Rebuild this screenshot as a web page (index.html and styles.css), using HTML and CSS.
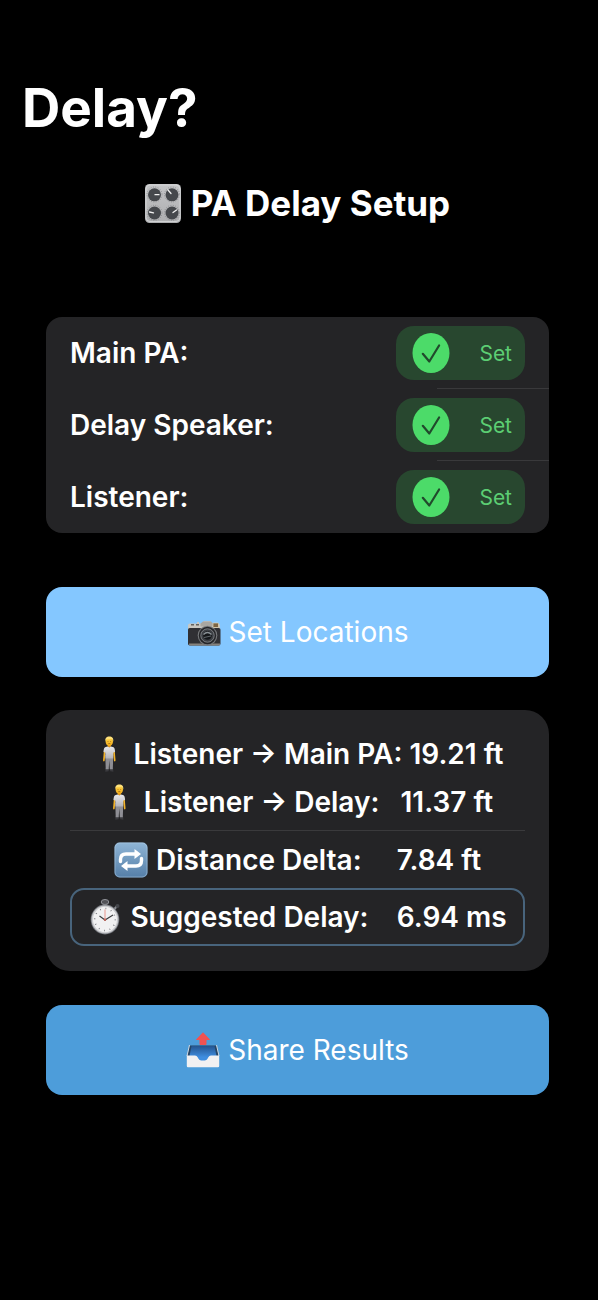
FILE: index.html
```html
<!DOCTYPE html>
<html lang="en">
<head>
<meta charset="utf-8">
<meta name="viewport" content="width=device-width, initial-scale=1">
<title>Delay?</title>
<link rel="stylesheet" href="styles.css">
</head>
<body>
<svg class="defs" aria-hidden="true">
  <defs>
    <linearGradient id="hair" x1="0" y1="0" x2="0" y2="1"><stop offset="0" stop-color="#ffd84a"/><stop offset="1" stop-color="#f0a818"/></linearGradient>
    <linearGradient id="shirt" x1="0" y1="0" x2="0" y2="1"><stop offset="0" stop-color="#e9e9ec"/><stop offset="1" stop-color="#b4b4ba"/></linearGradient>
    <linearGradient id="panel" x1="0" y1="0" x2="0" y2="1"><stop offset="0" stop-color="#c4c5c7"/><stop offset="1" stop-color="#adaeb0"/></linearGradient>
    <linearGradient id="tile" x1="0" y1="0" x2="0" y2="1"><stop offset="0" stop-color="#8fb5d6"/><stop offset="1" stop-color="#557fa8"/></linearGradient>
    <linearGradient id="tray" x1="0" y1="0" x2="0" y2="1"><stop offset="0" stop-color="#24548f"/><stop offset=".7" stop-color="#3f8ee0"/></linearGradient>
    <symbol id="person" viewBox="0 0 34 36">
      <path d="M13.500 32h3.200v3.200l-3.400.5zM17.800 32H21l.4 3.700-3.200-.5z" fill="#3b3b3f"/>
      <path d="M13.300 19h8l-.5 14.200h-3l-.5-9-.6 9h-3z" fill="#8f8f95"/>
      <path d="M11.900 14.500l1.700.3-.6 6.700-.4 3.600c-.9.8-1.700.1-1.500-1.400zM22.700 14.500l-1.700.3.6 6.700.4 3.600c.9.8 1.700.1 1.500-1.400z" fill="#f3b32a"/>
      <path d="M15.800 8.800h3v3h-3z" fill="#dc9218"/>
      <path d="M13.700 10.900l2-.5 1.600 1.200 1.600-1.200 2 .5c1.600.5 2 2 2.200 5l-1.800.5-.2 6h-7.600l-.2-6-1.800-.5c.2-3 .6-4.500 2.200-5z" fill="url(#shirt)"/>
      <ellipse cx="17.300" cy="5.500" rx="3.700" ry="4.600" fill="url(#hair)"/>
      <path d="M13.400 5.500C12.800 2.400 14.600.5 17.300.5s4.600 1.900 3.900 5c-.4-1.600-1.300-2.400-2.300-2.700-1.400.8-3.700.4-4.500.8-.6.4-.8 1-1 1.900z" fill="#ffe27b"/>
      <path d="M15.600 5.500h.8M18.300 5.500h.8M16.300 7.600h2" stroke="#8b5a17" stroke-width=".7"/>
    </symbol>
    <symbol id="set-check" viewBox="0 0 38 40">
      <ellipse cx="19" cy="20" rx="18.500" ry="20" fill="#4cdb69"/>
      <path d="M10.800 20.800l6.500 7.700 9.800-16" fill="none" stroke="#214a2c" stroke-width="2.200" stroke-linecap="round" stroke-linejoin="round"/>
    </symbol>
  </defs>
</svg>
<main class="page">
  <h1 class="title">Delay?</h1>
  <h2 class="subtitle">
    <svg class="knobs" viewBox="0 0 36 39" aria-hidden="true">
      <rect width="36" height="39" rx="4.500" fill="url(#panel)"/>
      <rect x="1" y="1" width="34" height="36.500" rx="4" fill="none" stroke="#d8d9da" stroke-width=".8"/>
      <g fill="none" stroke="#77797c" stroke-width=".8" stroke-dasharray=".8 1.600"><circle cx="9.500" cy="10.500" r="7.500"/><circle cx="27" cy="10.500" r="7.500"/><circle cx="9.500" cy="28.800" r="7.500"/><circle cx="27" cy="28.800" r="7.500"/></g>
      <g fill="#45484c"><circle cx="9.500" cy="10.800" r="6.500"/><circle cx="27" cy="10.800" r="6.500"/><circle cx="9.500" cy="29" r="6.500"/><circle cx="27" cy="29" r="6.500"/></g>
      <g stroke="#f2f2f2" stroke-width="1.300" stroke-linecap="round"><path d="M10 10.700h4M26 9.500l-3-3.500M8.500 28.800l-4-.8M28 28.500l3.500-2.500"/></g>
    </svg>
    <span>PA Delay Setup</span>
  </h2>

  <ul class="card status">
    <li class="status-row"><span class="status-name">Main PA:</span><span class="pill"><svg class="tick" aria-hidden="true"><use href="#set-check"/></svg><span>Set</span></span></li>
    <li class="status-row"><span class="status-name">Delay Speaker:</span><span class="pill"><svg class="tick" aria-hidden="true"><use href="#set-check"/></svg><span>Set</span></span></li>
    <li class="status-row"><span class="status-name">Listener:</span><span class="pill"><svg class="tick" aria-hidden="true"><use href="#set-check"/></svg><span>Set</span></span></li>
  </ul>

  <button class="action locations" type="button">
    <svg class="emoji" viewBox="0 0 34 36" aria-hidden="true">
      <path d="M3 9.500h7V8h2v1.500h2L17 7h6l2 2.500h6q2 0 2 2V15H1v-3.500q0-2 2-2z" fill="#c9c7c1"/>
      <path d="M13.500 9.500L16 7.500h8l2 2v3H13.500z" fill="#a9a7a2"/>
      <rect x="1" y="14" width="32.500" height="17.500" rx="1.800" fill="#303034"/>
      <path d="M2 29.500h31v1q0 1-1 1H3q-1 0-1-1z" fill="#85817b"/>
      <rect x="26" y="9" width="5.500" height="4.500" rx=".6" fill="#7c6544" stroke="#e3d8bd" stroke-width=".7"/>
      <path d="M4 10.800h3M9 10.800h3" stroke="#65635f" stroke-width="1.600"/>
      <circle cx="20.500" cy="21.500" r="9.800" fill="#77797c"/>
      <circle cx="20.500" cy="21.500" r="8.700" fill="#252629"/>
      <circle cx="20.500" cy="21.500" r="6.700" fill="#3c3f44" stroke="#8a8d91" stroke-width=".8"/>
      <circle cx="20.500" cy="21.500" r="4.300" fill="#15171a"/>
      <path d="M16.500 20.500q4-4 8 0" stroke="#8b9297" stroke-width="1.200" fill="none"/>
      <path d="M17 23.500l7-1.500" stroke="#686e73" stroke-width=".9"/>
    </svg>
    <span>Set Locations</span>
  </button>

  <section class="card results">
    <p class="result"><svg class="emoji" aria-hidden="true"><use href="#person"/></svg><span>Listener → Main PA: 19.21 ft</span></p>
    <p class="result"><svg class="emoji" aria-hidden="true"><use href="#person"/></svg><span>Listener → Delay:   11.37 ft</span></p>
    <hr class="rule">
    <p class="result">
      <svg class="emoji" viewBox="0 0 34 36" aria-hidden="true">
        <rect x=".5" y=".5" width="33" height="35" rx="5" fill="url(#tile)"/>
        <rect x="1" y="1" width="32" height="34" rx="5" fill="none" stroke="#b2cee5" stroke-opacity=".5"/>
        <path d="M6.500 19.500v-2q0-5.500 5.500-5.500h9M27.500 16.500v2q0 5.500-5.500 5.500h-9" fill="none" stroke="#fff" stroke-width="3.400" stroke-linecap="round"/>
        <path d="M20.500 7l6.500 5-6.500 5zM13.500 19L7 24l6.500 5z" fill="#fff"/>
      </svg>
      <span>Distance Delta:     7.84 ft</span>
    </p>
    <p class="result suggested">
      <svg class="emoji" viewBox="0 0 34 36" aria-hidden="true">
        <path d="M15 3h4v6h-4z" fill="#737478"/>
        <ellipse cx="17" cy="3" rx="3.800" ry="2.500" fill="#525358" stroke="#92949a"/>
        <path d="M26.500 10l2.500-3" stroke="#8d9096" stroke-width="2"/><circle cx="29.500" cy="7" r="2" fill="#44464b"/>
        <ellipse cx="17" cy="20.500" rx="14.300" ry="15" fill="#777a80"/>
        <ellipse cx="17" cy="20.500" rx="13.400" ry="14.100" fill="#c9cacd"/>
        <ellipse cx="17" cy="20.500" rx="12" ry="12.800" fill="#f1f1f2"/>
        <ellipse cx="17" cy="20.500" rx="10.300" ry="11" fill="none" stroke="#77797e" stroke-width="1.500" stroke-dasharray=".8 4.800"/>
        <path d="M17 20.500V10.500" stroke="#e98d82" stroke-width=".9"/>
        <path d="M11.500 17l5.500 4 8-5" fill="none" stroke="#3a3b3e" stroke-width="1.100"/>
        <circle cx="17" cy="20.700" r="1.200" fill="#bd6258"/>
      </svg>
      <span>Suggested Delay:    6.94 ms</span>
    </p>
  </section>

  <button class="action share" type="button">
    <svg class="emoji" viewBox="0 0 34 36" aria-hidden="true">
      <path d="M3.500 13.500h27L33 25H1z" fill="#254565"/>
      <path d="M5.500 14h23l2 10v6h-27v-6z" fill="url(#tray)"/>
      <path d="M3.500 13l-2.500 11M30.500 13L33 24" stroke="#cfd6de" stroke-width="1"/>
      <path d="M.8 23.500H9q1.800 0 2.800 2l.7 1.300q.9 1.700 2.700 1.700h3.600q1.800 0 2.700-1.700l.7-1.300q1-2 2.800-2h8.200V34q0 1.200-1.200 1.200H2Q.8 35.200.8 34z" fill="#f1f1f2"/>
      <path d="M17 .8l6.500 6.700h-3.500v5h-6v-5h-3.500z" fill="#f05353" stroke="#f05353" stroke-linejoin="round"/>
    </svg>
    <span>Share Results</span>
  </button>
</main>
</body>
</html>
```
FILE: styles.css
```css
* { box-sizing: border-box; }
body {
  margin: 0;
  background: #000;
  color: #fff;
  font-family: Inter, "Liberation Sans", sans-serif;
}
.defs { position: absolute; width: 0; height: 0; }
.page {
  display: flex;
  flex-direction: column;
  padding: 72px 49px 72px 46px;
}
.title {
  margin: 0 0 0 -24px;
  font-size: 53px;
  line-height: 72px;
  font-weight: 700;
}
.subtitle {
  display: flex;
  align-items: center;
  justify-content: center;
  gap: 10px;
  margin: 35px 0 90px;
  font-size: 35px;
  line-height: 48px;
  font-weight: 700;
}
.knobs { width: 36px; height: 39px; }
.card { margin: 0; background: #242426; }
.status {
  padding: 0;
  list-style: none;
  border-radius: 16px;
}
.status-row {
  position: relative;
  display: flex;
  align-items: center;
  justify-content: space-between;
  height: 72px;
  padding: 0 24px;
}
.status-row + .status-row::before {
  content: "";
  position: absolute;
  top: -1px;
  right: 0;
  width: 112px;
  height: 1px;
  background: #39393b;
}
.status-name { font-size: 28px; font-weight: 600; }
.pill {
  display: flex;
  align-items: center;
  justify-content: space-between;
  width: 129px;
  height: 54px;
  padding: 0 13px 0 16px;
  border-radius: 18px;
  background: #28472f;
  color: #5cce73;
  font-size: 21px;
}
.tick { width: 38px; height: 40px; }
.action {
  display: flex;
  align-items: center;
  justify-content: center;
  gap: 8px;
  height: 90px;
  border: 0;
  border-radius: 16px;
  color: #fff;
  font-family: inherit;
  font-size: 28px;
  font-weight: 400;
}
.locations { margin: 54px 0 33px; background: #84c7ff; }
.share { margin-top: 34px; background: #4d9dda; }
.emoji { flex: none; width: 34px; height: 36px; }
.results {
  padding: 20px 24px 25px;
  border-radius: 24px;
}
.result {
  display: flex;
  align-items: center;
  justify-content: center;
  gap: 8px;
  height: 48px;
  margin: 0;
  font-size: 28px;
  font-weight: 600;
  white-space: pre;
}
.rule {
  height: 1px;
  margin: 4px 0 5px;
  border: 0;
  background: #3a3a3c;
}
.suggested {
  height: 58px;
  margin-top: 4px;
  border: 2px solid #48647c;
  border-radius: 14px;
}
```
